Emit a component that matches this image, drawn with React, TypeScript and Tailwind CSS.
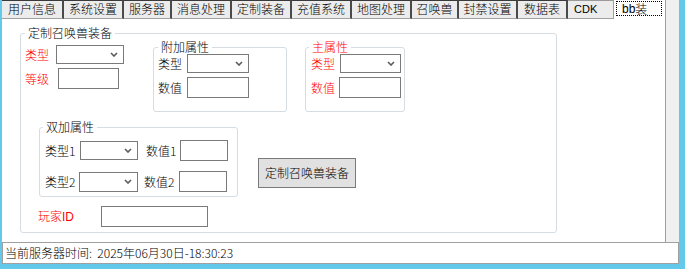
import React from "react";

const cjk = "font-['Noto_Sans_CJK_SC','Noto_Sans',sans-serif]";

function Chevron() {
  return (
    <svg width="8" height="5" viewBox="0 0 8 5" className="mr-[5px]">
      <path d="M1 1 L4 4 L7 1" fill="none" stroke="#5a5a5a" strokeWidth="1.6" />
    </svg>
  );
}

function Sel({ cls }: { cls: string }) {
  return (
    <div className={`${cls} border border-[#7a7a7a] bg-white flex items-center justify-end shrink-0`}>
      <Chevron />
    </div>
  );
}

function Inp({ cls }: { cls: string }) {
  return <div className={`${cls} border border-[#7a7a7a] bg-white shrink-0`} />;
}

const tabs: { t: string; w: string }[] = [
  { t: "用户信息", w: "w-[62px]" },
  { t: "系统设置", w: "w-[60px]" },
  { t: "服务器", w: "w-[48px]" },
  { t: "消息处理", w: "w-[60px]" },
  { t: "定制装备", w: "w-[60px]" },
  { t: "充值系统", w: "w-[60px]" },
  { t: "地图处理", w: "w-[60px]" },
  { t: "召唤兽", w: "w-[47px]" },
  { t: "封禁设置", w: "w-[59px]" },
  { t: "数据表", w: "w-[50px]" },
];

export default function App() {
  return (
    <div className={`w-[685px] h-[269px] bg-[#63c9ea] pl-[2px] flex flex-col overflow-hidden text-[12px] leading-[14px] font-light text-black ${cjk}`}>
      <div className="flex h-[242px] w-[677px] bg-[#f0f0f0]">
        <div className="w-[664px] flex flex-col">
          {/* tab strip */}
          <div className="flex h-[19px]">
            {tabs.map((tb) => (
              <div
                key={tb.t}
                className={`${tb.w} h-[19px] shrink-0 bg-[#ececec] border-t border-t-[#3a3a3a] border-r-2 border-r-[#4a4a4a] border-b border-b-[#a0a0a0] flex items-center justify-center pb-[1px]`}
              >
                {tb.t}
              </div>
            ))}
            <div className="w-[45px] h-[19px] shrink-0 bg-[#ececec] border-t border-t-[#9a9a9a] border-b border-b-[#a0a0a0] flex items-center pl-[6px] pb-[1px] font-['Liberation_Sans',sans-serif] font-normal text-[11px]">
              CDK
            </div>
            <div className="w-[53px] h-[19px] shrink-0 bg-white border-l border-r border-[#a0a0a0] pl-[2px] pt-[1px]">
              <div className="w-[46px] h-[15px] border border-dotted border-black flex items-center pl-[5px]">
                <span className="font-['Liberation_Sans',sans-serif] font-normal text-[12px]">bb</span>
                <span>装</span>
              </div>
            </div>
          </div>
          {/* panel */}
          <div className="flex-1 bg-white border-r border-[#a0a0a0]">
            <fieldset className="ml-[18px] mt-[7px] w-[537px] h-[207px] border border-[#d5dde3] rounded-[3px]">
              <legend className="ml-[4px] px-[3px] leading-[14px]">定制召唤兽装备</legend>
              {/* row 1 */}
              <div className="flex items-start">
                <div className="ml-[4px] mt-[5px] flex flex-col gap-[4px] text-[#ff0000]">
                  <div className="flex items-center">
                    <span className="w-[24px]">类型</span>
                    <Sel cls="ml-[7px] w-[68px] h-[19px]" />
                  </div>
                  <div className="flex items-center">
                    <span className="w-[24px]">等级</span>
                    <Inp cls="ml-[9px] w-[61px] h-[21px]" />
                  </div>
                </div>
                <fieldset className="ml-[29px] w-[134px] h-[72px] border border-[#d5dde3] rounded-[3px] shrink-0">
                  <legend className="ml-[4px] px-[3px] leading-[14px]">附加属性</legend>
                  <div className="pl-[4px] flex flex-col gap-[4px]">
                    <div className="flex items-center">
                      <span className="w-[24px]">类型</span>
                      <Sel cls="ml-[5px] w-[62px] h-[19px]" />
                    </div>
                    <div className="flex items-center">
                      <span className="w-[24px]">数值</span>
                      <Inp cls="ml-[5px] w-[62px] h-[21px]" />
                    </div>
                  </div>
                </fieldset>
                <fieldset className="ml-[18px] w-[100px] h-[72px] border border-[#d5dde3] rounded-[3px] shrink-0 text-[#ff0000]">
                  <legend className="ml-[3px] px-[3px] leading-[14px]">主属性</legend>
                  <div className="pl-[5px] flex flex-col gap-[4px]">
                    <div className="flex items-center">
                      <span className="w-[24px]">类型</span>
                      <Sel cls="ml-[5px] w-[61px] h-[19px]" />
                    </div>
                    <div className="flex items-center">
                      <span className="w-[24px]">数值</span>
                      <Inp cls="ml-[4px] w-[62px] h-[21px]" />
                    </div>
                  </div>
                </fieldset>
              </div>
              {/* row 2 */}
              <div className="flex items-start mt-[8px]">
                <fieldset className="ml-[18px] w-[199px] h-[77px] border border-[#d5dde3] rounded-[3px] shrink-0">
                  <legend className="ml-[3px] px-[3px] leading-[14px]">双加属性</legend>
                  <div className="pl-[5px] pt-[6px]">
                    <div className="flex items-center">
                      <span className="w-[35px]">类型1</span>
                      <Sel cls="w-[58px] h-[19px]" />
                      <span className="ml-[8px] w-[34px]">数值1</span>
                      <Inp cls="w-[48px] h-[21px]" />
                    </div>
                    <div className="flex items-center mt-[10px]">
                      <span className="w-[34px]">类型2</span>
                      <Sel cls="w-[59px] h-[20px]" />
                      <span className="ml-[6px] w-[35px]">数值2</span>
                      <Inp cls="w-[48px] h-[21px]" />
                    </div>
                  </div>
                </fieldset>
                <div className="ml-[20px] mt-[38px] w-[98px] h-[30px] bg-[#e1e1e1] border border-[#7a7a7a] flex items-center justify-center">
                  定制召唤兽装备
                </div>
              </div>
              {/* row 3 */}
              <div className="flex items-center mt-[9px]">
                <span className="ml-[17px] w-[63px] text-[#ff0000]">
                  玩家<span className="font-['Liberation_Sans',sans-serif] font-normal text-[12px]">ID</span>
                </span>
                <Inp cls="w-[107px] h-[21px]" />
              </div>
            </fieldset>
          </div>
        </div>
      </div>
      <div className="w-[677px] h-[22px] bg-white border border-[#a0a0a0] flex items-center pl-[2px] whitespace-pre">
        当前服务器时间:  2025年06月30日-18:30:23
      </div>
    </div>
  );
}
